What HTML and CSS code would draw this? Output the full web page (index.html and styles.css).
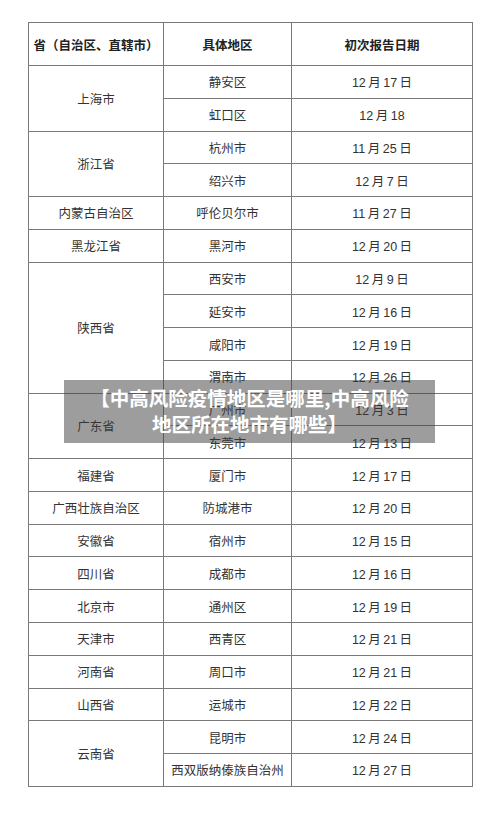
FILE: index.html
```html
<!DOCTYPE html>
<html lang="zh-CN">
<head>
<meta charset="utf-8">
<link rel="stylesheet" href="styles.css">
</head>
<body>
<div class="page">
  <table class="risk">
    <colgroup><col class="c1"><col class="c2"><col class="c3"></colgroup>
    <thead>
      <tr><th>省（自治区、直辖市）</th><th>具体地区</th><th>初次报告日期</th></tr>
    </thead>
    <tbody>
      <tr><td rowspan="2">上海市</td><td>静安区</td><td>12 月 17 日</td></tr>
      <tr><td>虹口区</td><td>12 月 18</td></tr>
      <tr><td rowspan="2">浙江省</td><td>杭州市</td><td>11 月 25 日</td></tr>
      <tr><td>绍兴市</td><td>12 月 7 日</td></tr>
      <tr><td>内蒙古自治区</td><td>呼伦贝尔市</td><td>11 月 27 日</td></tr>
      <tr><td>黑龙江省</td><td>黑河市</td><td>12 月 20 日</td></tr>
      <tr><td rowspan="4">陕西省</td><td>西安市</td><td>12 月 9 日</td></tr>
      <tr><td>延安市</td><td>12 月 16 日</td></tr>
      <tr><td>咸阳市</td><td>12 月 19 日</td></tr>
      <tr><td>渭南市</td><td>12 月 26 日</td></tr>
      <tr><td rowspan="2">广东省</td><td>广州市</td><td>12 月 3 日</td></tr>
      <tr><td>东莞市</td><td>12 月 13 日</td></tr>
      <tr><td>福建省</td><td>厦门市</td><td>12 月 17 日</td></tr>
      <tr><td>广西壮族自治区</td><td>防城港市</td><td>12 月 20 日</td></tr>
      <tr><td>安徽省</td><td>宿州市</td><td>12 月 15 日</td></tr>
      <tr><td>四川省</td><td>成都市</td><td>12 月 16 日</td></tr>
      <tr><td>北京市</td><td>通州区</td><td>12 月 19 日</td></tr>
      <tr><td>天津市</td><td>西青区</td><td>12 月 21 日</td></tr>
      <tr><td>河南省</td><td>周口市</td><td>12 月 21 日</td></tr>
      <tr><td>山西省</td><td>运城市</td><td>12 月 22 日</td></tr>
      <tr><td rowspan="2">云南省</td><td>昆明市</td><td>12 月 24 日</td></tr>
      <tr><td>西双版纳傣族自治州</td><td>12 月 27 日</td></tr>
    </tbody>
  </table>
  <div class="caption">【中高风险疫情地区是哪里,中高风险<br>地区所在地市有哪些】</div>
</div>
</body>
</html>
```
FILE: styles.css
```css
html, body {
  margin: 0;
  padding: 0;
  background: #fff;
}
.page {
  position: relative;
  width: 500px;
  height: 823px;
  padding-top: 22px;
  box-sizing: border-box;
}
.risk {
  margin-left: 28px;
  width: 444px;
  border-collapse: collapse;
  table-layout: fixed;
  font-family: "Liberation Sans", "Noto Sans CJK SC", sans-serif;
  font-size: 12.5px;
  color: #333;
}
.c1 { width: 135px; }
.c2 { width: 128px; }
.c3 { width: 181px; }
.risk th, .risk td {
  border: 1px solid #7a7a7a;
  text-align: center;
  vertical-align: middle;
  padding: 0;
  word-spacing: -1px;
}
.risk thead tr { height: 43px; }
.risk th { font-weight: bold; color: #222; }
.risk tbody tr { height: 32.77px; }
.caption {
  position: absolute;
  left: 64px;
  top: 380px;
  width: 371px;
  height: 63px;
  background: rgba(60, 60, 60, 0.5);
  color: #fff;
  font-family: "Noto Sans CJK SC", sans-serif;
  font-weight: bold;
  font-size: 19.5px;
  line-height: 26px;
  text-align: center;
  padding-top: 5px;
  box-sizing: border-box;
}
```
